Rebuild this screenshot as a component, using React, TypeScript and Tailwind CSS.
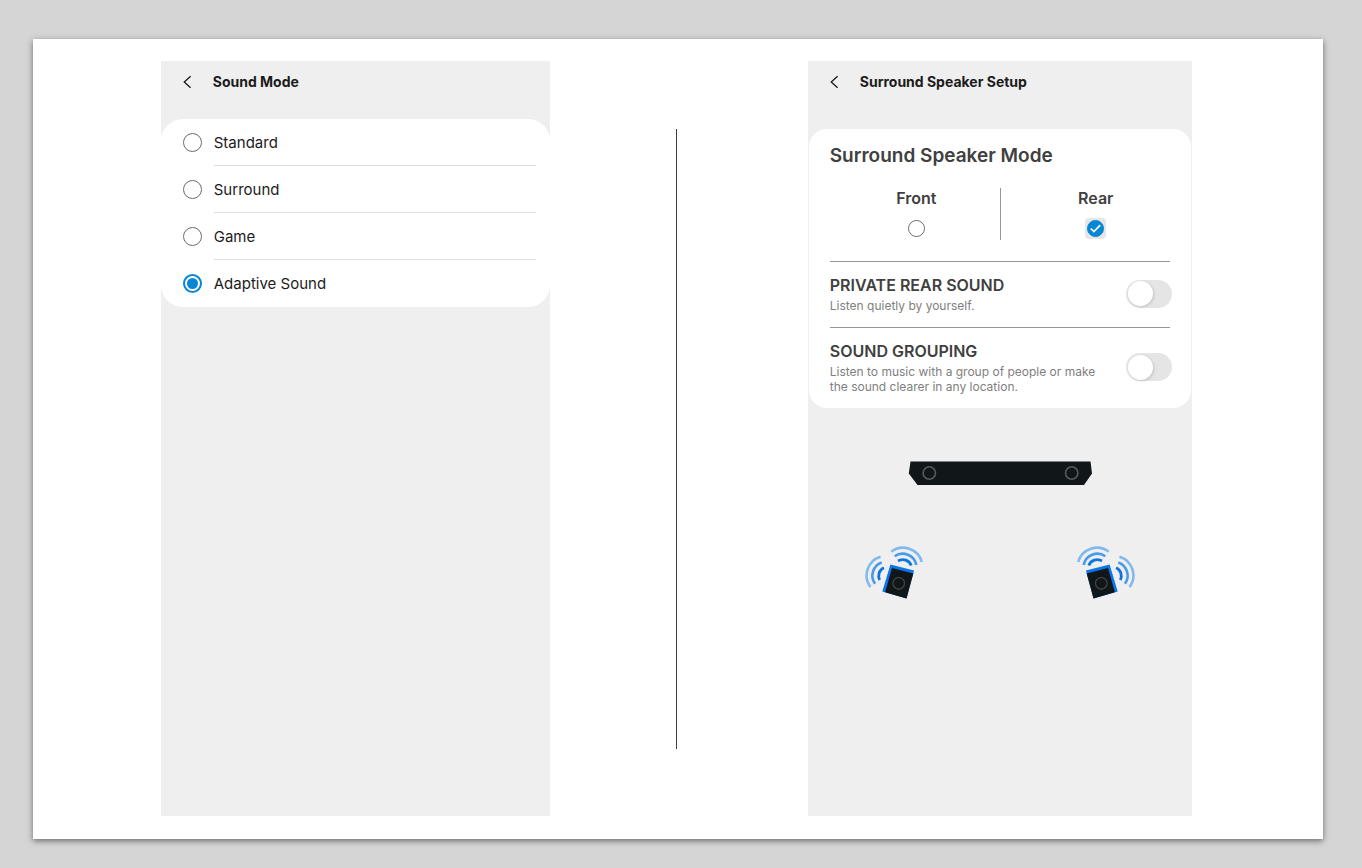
import { useState } from "react";
import type { ReactNode } from "react";

const soundModes = ["Standard", "Surround", "Game", "Adaptive Sound"];

function Screen({ title, children }: { title: string; children: ReactNode }) {
  return (
    <section className="flex w-full flex-col bg-[#efefef]">
      <header className="flex h-[42px] shrink-0 items-center gap-[18px] pl-[22px]">
        <button type="button" aria-label="Back" className="flex h-6 w-3 items-center justify-start">
          <svg width="9" height="14" viewBox="0 0 9 14" fill="none" stroke="#111" strokeWidth="1.2">
            <path d="M7.6 1.2 1.2 7l6.4 5.8" />
          </svg>
        </button>
        <h1 className="text-[14px] leading-5 font-bold text-[#1b1b1b]">{title}</h1>
      </header>
      {children}
    </section>
  );
}

function SoundMode() {
  const [mode, setMode] = useState("Adaptive Sound");
  return (
    <Screen title="Sound Mode">
      <fieldset className="mt-4 rounded-[22px] bg-white pr-3.5 pl-[22px]">
        {soundModes.map((name) => (
          <label key={name} className="group flex h-[47px] items-center gap-3">
            <input
              type="radio"
              name="sound-mode"
              checked={mode === name}
              onChange={() => setMode(name)}
              className="grid size-[19px] shrink-0 appearance-none place-items-center rounded-full border border-[#6b6b6b] before:size-[11px] before:rounded-full checked:border-2 checked:border-[#0786d5] checked:before:bg-[#0786d5]"
            />
            <span className="flex h-full flex-1 items-center border-b border-[#dedede] pt-0.5 text-[15px] text-[#1b1b1b] group-last:border-transparent">
              {name}
            </span>
          </label>
        ))}
      </fieldset>
    </Screen>
  );
}

function ToggleRow({ id, title, text }: { id: string; title: string; text: string }) {
  const [on, setOn] = useState(false);
  return (
    <div className="flex items-center justify-between border-t border-[#969696] pt-3 pb-3.5">
      <div className="max-w-[280px]">
        <label htmlFor={id} className="block text-[16px] leading-[22px] font-semibold text-[#404040]">
          {title}
        </label>
        <p id={id + "-text"} className="mt-0.5 text-[12px] leading-[15px] text-[#808080]">
          {text}
        </p>
      </div>
      <input
        id={id}
        type="checkbox"
        role="switch"
        aria-describedby={id + "-text"}
        checked={on}
        onChange={() => setOn(!on)}
        className="-mr-0.5 flex h-7 w-[46px] shrink-0 appearance-none items-center rounded-full bg-[#e5e5e5] px-0.5 before:size-[25px] before:rounded-full before:bg-white before:shadow-[1px_1px_3px_rgba(0,0,0,0.15)] checked:justify-end checked:bg-[#0786d5]"
      />
    </div>
  );
}

function PositionOption({ name, checked, onSelect }: { name: string; checked: boolean; onSelect: () => void }) {
  return (
    <label className="flex flex-col items-center gap-2.5 text-[16px] leading-5 font-semibold text-[#404040]">
      {name}
      <span className={checked ? "grid size-[21px] place-items-center rounded bg-[#e6e6e6]" : "grid size-[21px] place-items-center"}>
        <input
          type="radio"
          name="speaker-position"
          checked={checked}
          onChange={onSelect}
          className="col-start-1 row-start-1 size-[17px] appearance-none rounded-full border border-[#6b6b6b] checked:border-[#0786d5] checked:bg-[#0786d5]"
        />
        {checked && (
          <svg className="pointer-events-none col-start-1 row-start-1" width="17" height="17" viewBox="0 0 17 17" fill="none" stroke="#fff" strokeWidth="1.7">
            <path d="m3.8 8.5 3.1 3.1 6.3-6.4" />
          </svg>
        )}
      </span>
    </label>
  );
}

function Satellite({ mirrored = false }: { mirrored?: boolean }) {
  return (
    <svg width="60" height="54" viewBox="0 0 60 54" fill="none" aria-hidden="true">
      <g transform={mirrored ? "translate(60 0) scale(-1 1)" : undefined}>
        <g stroke="#84b9ee" strokeWidth="2.6">
          <path d="M27.3 5.7A19.5 19.5 0 0 1 57.8 16" />
          <path d="M16.5 10.7A19.5 19.5 0 0 0 6.5 41" />
        </g>
        <g stroke="#4a9aea" strokeWidth="2.6">
          <path d="M30.7 10.2A14 14 0 0 1 52.3 19" />
          <path d="M17.7 16.5A14 14 0 0 0 11 37.8" />
        </g>
        <g stroke="#0b76e0" strokeWidth="2.8">
          <path d="M34 15A9 9 0 0 1 47.3 19.5" />
          <path d="M19.9 21.7A9 9 0 0 0 15.7 34" />
        </g>
        <path d="M26.4 18.6 50.1 24.6 42.5 52.4 18.3 45.4Z" fill="#0a76ea" />
        <path d="M28 22 49.3 27.6 42.5 52.6 21.1 46.3Z" fill="#111618" />
        <circle cx="34.7" cy="37.3" r="5.8" stroke="#464b4e" strokeWidth="1.1" />
      </g>
    </svg>
  );
}

function SurroundSetup() {
  const [position, setPosition] = useState("Rear");
  return (
    <Screen title="Surround Speaker Setup">
      <div className="mx-px mt-[26px] rounded-[18px] bg-white px-[21px] pt-3.5">
        <h2 className="text-[19px] leading-[26px] font-semibold text-[#404040]">Surround Speaker Mode</h2>
        <fieldset className="-mx-[21px] mt-[19px] mb-[21px] grid h-[52px] grid-cols-2">
          <div className="pl-6">
            <PositionOption name="Front" checked={position === "Front"} onSelect={() => setPosition("Front")} />
          </div>
          <div className="border-l border-[#969696]">
            <PositionOption name="Rear" checked={position === "Rear"} onSelect={() => setPosition("Rear")} />
          </div>
        </fieldset>
        <ToggleRow id="private-rear" title="PRIVATE REAR SOUND" text="Listen quietly by yourself." />
        <ToggleRow
          id="grouping"
          title="SOUND GROUPING"
          text="Listen to music with a group of people or make the sound clearer in any location."
        />
      </div>
      <div className="mt-[53px] flex flex-col items-center gap-[61px]">
        <svg width="184" height="24" viewBox="0 0 184 24" fill="none" aria-hidden="true">
          <path d="M2.5.5h180l1.5 12L176 24H9.5L.8 12.5Z" fill="#111618" />
          <g stroke="#555a5d" strokeWidth="1.6">
            <circle cx="21.3" cy="12" r="6.2" />
            <circle cx="163.7" cy="12" r="6.2" />
          </g>
        </svg>
        <div className="flex w-[272px] justify-between">
          <Satellite />
          <Satellite mirrored />
        </div>
      </div>
    </Screen>
  );
}

export default function App() {
  return (
    <div className="flex min-h-screen flex-col bg-[#d5d5d5] pt-[39px] pr-[39px] pb-[29px] pl-[33px] font-['Inter','Liberation_Sans',sans-serif]">
      <main className="grid flex-1 grid-cols-[1fr_1px_1fr] bg-white pt-[22px] pr-1 pb-[23px] shadow-[0_2px_6px_rgba(0,0,0,0.5)]">
        <div className="flex justify-center pl-0.5">
          <div className="flex w-full max-w-[389px]">
            <SoundMode />
          </div>
        </div>
        <div className="mt-[68px] mb-[67px] bg-[#3c3c3c]" />
        <div className="flex justify-center pl-1">
          <div className="flex w-full max-w-[384px]">
            <SurroundSetup />
          </div>
        </div>
      </main>
    </div>
  );
}
